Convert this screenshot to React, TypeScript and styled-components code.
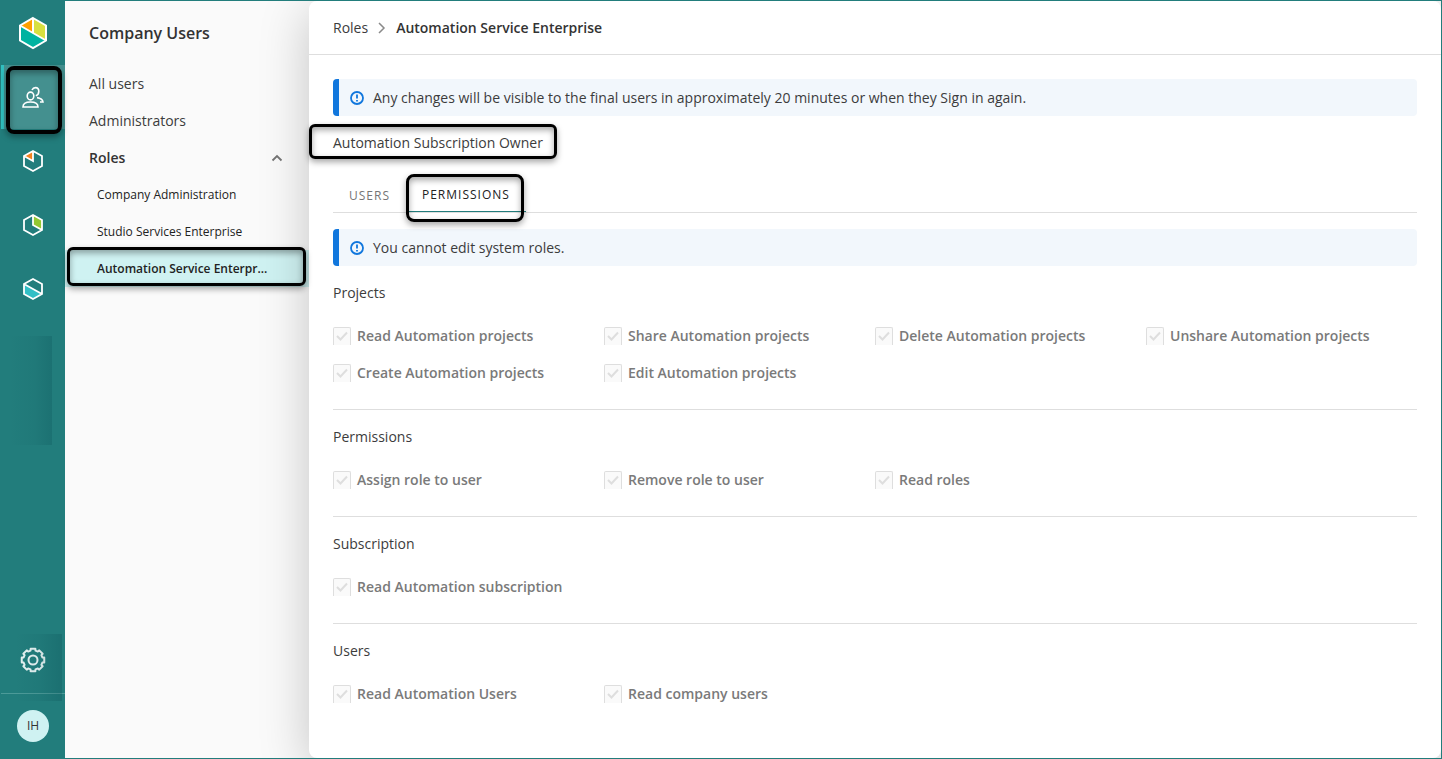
import React from 'react';
import styled, { createGlobalStyle, css } from 'styled-components';

const GlobalStyle = createGlobalStyle`
  * { box-sizing: border-box; }
  body {
    margin: 0;
    font-family: "Open Sans", "Noto Sans", sans-serif;
    font-size: 14px;
    line-height: 20px;
    color: #3c3c3c;
    background: #fafafa;
  }
  h1, h2, h3, p, ul, ol, fieldset { margin: 0; padding: 0; border: 0; font: inherit; }
  ul, ol { list-style: none; }
  a { color: inherit; text-decoration: none; }
`;

const Page = styled.div`
  display: flex;
  min-height: 100vh;
  border: 1px solid #227d7c;
  overflow: hidden;
`;

const highlight = css<{ $inset: string; $radius?: number; $width?: number }>`
  position: relative;
  &::after {
    content: '';
    position: absolute;
    z-index: 2;
    inset: ${(p) => p.$inset};
    border: ${(p) => p.$width ?? 3}px solid #000;
    border-radius: ${(p) => p.$radius ?? 6}px;
    box-shadow: 0 3px 6px rgba(0, 0, 0, 0.35), inset 0 3px 6px rgba(0, 0, 0, 0.35);
    pointer-events: none;
  }
`;

const Rail = styled.nav`
  display: flex;
  flex-direction: column;
  flex: none;
  width: 64px;
  background: #227d7c;
  position: relative;
  z-index: 2;
`;

const RailLink = styled.a`
  display: flex;
  align-items: center;
  justify-content: center;
  height: 64px;
`;

const ActiveRailLink = styled(RailLink)`
  ${highlight}
  background: #44908f;
  box-shadow: inset 3px 0 #31c0c0;
`;

const RailShade = styled.div`
  height: 109px;
  margin: 15px 13px 0 8px;
  background: linear-gradient(90deg, rgba(0, 60, 70, 0), rgba(0, 60, 70, 0.06) 60%, rgba(0, 60, 70, 0.18));
`;

const RailFooter = styled.div`
  margin-top: auto;
`;

const SettingsLink = styled(RailLink)`
  border-bottom: 1px solid #4c9a98;
  height: 65px;
  padding-bottom: 2px;
  position: relative;
  &::before {
    content: '';
    position: absolute;
    inset: 5px 3px -8px 14px;
    background: linear-gradient(90deg, rgba(0, 60, 70, 0), rgba(0, 60, 70, 0.06) 50%, rgba(0, 60, 70, 0.2));
  }
`;

const Avatar = styled.span`
  display: flex;
  align-items: center;
  justify-content: center;
  width: 32px;
  height: 32px;
  border-radius: 50%;
  background: #cff2f2;
  color: #333;
  font-size: 12px;
`;

const Sidebar = styled.aside`
  flex: none;
  width: 244px;
  background: #fafafa;
`;

const SidebarTitle = styled.h2`
  height: 64px;
  padding: 0 24px;
  font-size: 16px;
  line-height: 64px;
  font-weight: 600;
  color: #333;
`;

const SidebarLink = styled.a`
  display: block;
  padding: 0 24px;
  line-height: 37px;
`;

const GroupToggle = styled.button`
  display: flex;
  align-items: center;
  justify-content: space-between;
  width: 100%;
  height: 37px;
  padding: 0 26px 0 24px;
  border: 0;
  background: none;
  font: inherit;
  font-weight: 600;
  color: #333;
`;

const RoleLink = styled(SidebarLink)`
  padding: 0 32px;
  font-size: 12px;
  color: #222;
`;

const ActiveRoleLink = styled(RoleLink)`
  ${highlight}
  background: #cff2f2;
  font-weight: 600;
`;

const Main = styled.main`
  flex: 1;
  min-width: 0;
  background: #fff;
  border-radius: 8px;
  position: relative;
  z-index: 1;
  box-shadow: 0 10px 50px rgba(0, 0, 0, 0.22);
`;

const Breadcrumb = styled.header`
  display: flex;
  align-items: center;
  gap: 8px;
  height: 54px;
  padding: 0 24px;
  border-bottom: 1px solid #dedede;
`;

const Current = styled.h1`
  font-weight: 600;
  color: #333;
`;

const Content = styled.div`
  padding: 24px;
`;

const AlertBox = styled.div`
  display: flex;
  align-items: center;
  gap: 9px;
  height: 37px;
  padding-left: 11px;
  border-left: 6px solid #1177dd;
  border-radius: 4px;
  background: #f2f7fc;
`;

const RoleName = styled.h2`
  ${highlight}
  width: max-content;
  margin-top: 8px;
  line-height: 37px;
`;

const Tabs = styled.div`
  display: flex;
  height: 36px;
  margin: 16px 0;
  border-bottom: 1px solid #dedede;
`;

const Tab = styled.button`
  padding: 2px 16px 0;
  border: 0;
  background: none;
  font: inherit;
  font-size: 12px;
  letter-spacing: 1px;
  color: #757575;
`;

const ActiveTab = styled(Tab)`
  ${highlight}
  border-bottom: 1px solid #227d7c;
  color: #222;
`;

const Section = styled.fieldset`
  && {
    min-width: 0;
    padding: 8px 0 18px;
    border-bottom: 1px solid #dedede;
  }
  &&:last-child { border-bottom: 0; }
`;

const SectionTitle = styled.h3`
  margin-bottom: 6px;
  line-height: 37px;
`;

const Options = styled.div`
  display: grid;
  grid-template-columns: repeat(4, 1fr);
`;

const Option = styled.label`
  display: flex;
  align-items: center;
  gap: 6px;
  height: 37px;
  font-weight: 600;
  color: #7a7a7a;
`;

const Tick = styled.span`
  display: grid;
  flex: none;
  > * { grid-area: 1 / 1; }
`;

const TickInput = styled.input`
  appearance: none;
  width: 18px;
  height: 18px;
  margin: 0;
  border: 1px solid #dedede;
  border-bottom: 0;
  border-radius: 2px 2px 0 0;
  background: #fafafa;
`;

const BrandLogo = () => (
  <svg width="30" height="34" viewBox="0 0 30 34" aria-label="Home">
    <path d="M15 2 28 9.5v15L15 32 2 24.5v-15z" fill="#00b3a1" />
    <path d="M15 2 2 9.5 15 17z" fill="#ffa000" />
    <path d="M15 2 28 9.5v15L15 17z" fill="#d7e040" />
    <path d="M15 2 28 9.5v15L15 32 2 24.5v-15zM2 9.500l26 15M15 2v15" fill="none" stroke="#fff" strokeWidth="2" />
  </svg>
);

const shapes = {
  corner: { fill: '#f5821f', area: 'M11 2 2 7l9 5z', lines: 'M11 2v10L2 7' },
  side: { fill: '#93c832', area: 'M11 2l9 5v10l-9-5z', lines: 'M11 2v10l9 5' },
  base: { fill: '#33bfc6', area: 'M2 7l18 10-9 5-9-5z', lines: 'M2 7l18 10' },
};

const CubeIcon = ({ kind }: { kind: keyof typeof shapes }) => (
  <svg width="22" height="24" viewBox="0 0 22 24" aria-label={kind}>
    <path d={shapes[kind].area} fill={shapes[kind].fill} />
    <path d={`M11 2l9 5v10l-9 5-9-5V7z${shapes[kind].lines}`} fill="none" stroke="#fff" strokeWidth="1.8" />
  </svg>
);

const UsersIcon = () => (
  <svg width="24" height="24" viewBox="0 0 24 24" fill="none" stroke="#fff" strokeWidth="1.6" aria-label="Users">
    <ellipse cx="9.5" cy="11" rx="3.3" ry="3.9" />
    <path d="M2 22c0-3.500 3-5 7.500-5s7.500 1.500 7.500 5z" />
    <path d="M11 5c.8-1.700 2-2.400 3.500-2.400 2 0 3.300 1.500 3.300 3.700 0 2.500-1.200 4-3 4.500M16 12.600c3.500.5 5.700 1.900 6 4.400h-3" />
  </svg>
);

const teeth = Array.from({ length: 8 }, (_, i) => {
  const at = (r: number, deg: number) => {
    const a = ((i * 45 + deg) * Math.PI) / 180;
    return `${(13 + r * Math.sin(a)).toFixed(2)} ${(13 - r * Math.cos(a)).toFixed(2)}`;
  };
  return `${at(11.5, -12)}L${at(11.5, 12)}L${at(9.7, 15)}L${at(9.7, 30)}`;
}).join('L');

const GearIcon = () => (
  <svg width="26" height="26" viewBox="0 0 26 26" fill="none" stroke="#e6f2f2" strokeWidth="2" strokeLinejoin="round" aria-label="Settings">
    <path d={`M${teeth}z`} />
    <circle cx="13" cy="13" r="4.5" />
  </svg>
);

const Chevron = ({ up }: { up?: boolean }) => (
  <svg width="12" height="12" viewBox="0 0 12 12" fill="none" stroke={up ? '#757575' : '#8a8a8a'} strokeWidth={up ? 1.8 : 1.5} aria-hidden="true">
    <path d={up ? 'M1.500 8.500 6 4l4.500 4.500' : 'M3 1l5 5-5 5'} />
  </svg>
);

const Alert = ({ children }: { children: React.ReactNode }) => (
  <AlertBox role="status">
    <svg width="14" height="14" viewBox="0 0 14 14" fill="none" stroke="#1177dd" strokeWidth="1.8" aria-hidden="true">
      <circle cx="7" cy="7" r="6" />
      <path d="M7 3.500v4M7 9v1.600" />
    </svg>
    <p>{children}</p>
  </AlertBox>
);

const sections = [
  {
    title: 'Projects',
    options: [
      'Read Automation projects',
      'Share Automation projects',
      'Delete Automation projects',
      'Unshare Automation projects',
      'Create Automation projects',
      'Edit Automation projects',
    ],
  },
  { title: 'Permissions', options: ['Assign role to user', 'Remove role to user', 'Read roles'] },
  { title: 'Subscription', options: ['Read Automation subscription'] },
  { title: 'Users', options: ['Read Automation Users', 'Read company users'] },
];

export default function App() {
  return (
    <>
      <GlobalStyle />
      <Page>
        <Rail>
          <RailLink href="#home"><BrandLogo /></RailLink>
          <ActiveRailLink href="#users" $inset="1px 3px -5px 5px" $width={4} $radius={8}><UsersIcon /></ActiveRailLink>
          <RailLink href="#studio"><CubeIcon kind="corner" /></RailLink>
          <RailLink href="#automation"><CubeIcon kind="side" /></RailLink>
          <RailLink href="#services"><CubeIcon kind="base" /></RailLink>
          <RailShade />
          <RailFooter>
            <SettingsLink href="#settings"><GearIcon /></SettingsLink>
            <RailLink href="#profile"><Avatar>IH</Avatar></RailLink>
          </RailFooter>
        </Rail>
        <Sidebar>
          <SidebarTitle>Company Users</SidebarTitle>
          <SidebarLink href="#all">All users</SidebarLink>
          <SidebarLink href="#admins">Administrators</SidebarLink>
          <GroupToggle type="button" aria-expanded="true">Roles<Chevron up /></GroupToggle>
          <RoleLink href="#company">Company Administration</RoleLink>
          <RoleLink href="#studio-services">Studio Services Enterprise</RoleLink>
          <ActiveRoleLink href="#automation-service" $inset="-3px 3px 1px 2px">Automation Service Enterpr...</ActiveRoleLink>
        </Sidebar>
        <Main>
          <Breadcrumb>
            <a href="#roles">Roles</a>
            <Chevron />
            <Current>Automation Service Enterprise</Current>
          </Breadcrumb>
          <Content>
            <Alert>Any changes will be visible to the final users in approximately 20 minutes or when they Sign in again.</Alert>
            <RoleName $inset="0 -14px 2px -24px">Automation Subscription Owner</RoleName>
            <Tabs role="tablist">
              <Tab type="button" role="tab" aria-selected="false">USERS</Tab>
              <ActiveTab type="button" role="tab" aria-selected="true" $inset="-3px 2px -11px 0" $radius={8}>PERMISSIONS</ActiveTab>
            </Tabs>
            <Alert>You cannot edit system roles.</Alert>
            {sections.map((section) => (
              <Section key={section.title} aria-label={section.title}>
                <SectionTitle>{section.title}</SectionTitle>
                <Options>
                  {section.options.map((name) => (
                    <Option key={name}>
                      <Tick>
                        <TickInput type="checkbox" defaultChecked disabled />
                        <svg width="18" height="18" viewBox="0 0 18 18" fill="none" stroke="#dedede" strokeWidth="2" aria-hidden="true">
                          <path d="M4 9l3.500 3.500L14 5.500" />
                        </svg>
                      </Tick>
                      {name}
                    </Option>
                  ))}
                </Options>
              </Section>
            ))}
          </Content>
        </Main>
      </Page>
    </>
  );
}
